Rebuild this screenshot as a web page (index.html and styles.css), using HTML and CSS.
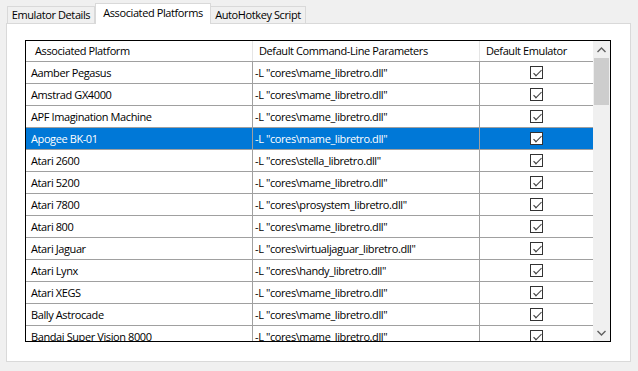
FILE: index.html
```html
<!DOCTYPE html>
<html lang="en">
  <head>
    <meta charset="UTF-8" />
    <title>Associated Platforms</title>
    <link rel="stylesheet" href="styles.css">
  </head>
  <body>
    <div class="tabs">
      <div class="tab tab-1">Emulator Details</div>
      <div class="tab tab-2 active">Associated Platforms</div>
      <div class="tab tab-3">AutoHotkey Script</div>
    </div>

    <div class="panel">
      <div class="grid">
        <div class="table">
          <div class="row head">
            <div class="cell c1">Associated Platform</div>
            <div class="cell c2">Default Command-Line Parameters</div>
            <div class="cell c3">Default Emulator</div>
          </div>
          <div class="row">
            <div class="cell c1">Aamber Pegasus</div>
            <div class="cell c2">-L "cores\mame_libretro.dll"</div>
            <div class="cell c3"><span class="check"></span></div>
          </div>
          <div class="row">
            <div class="cell c1">Amstrad GX4000</div>
            <div class="cell c2">-L "cores\mame_libretro.dll"</div>
            <div class="cell c3"><span class="check"></span></div>
          </div>
          <div class="row">
            <div class="cell c1">APF Imagination Machine</div>
            <div class="cell c2">-L "cores\mame_libretro.dll"</div>
            <div class="cell c3"><span class="check"></span></div>
          </div>
          <div class="row selected">
            <div class="cell c1">Apogee BK-01</div>
            <div class="cell c2">-L "cores\mame_libretro.dll"</div>
            <div class="cell c3"><span class="check"></span></div>
          </div>
          <div class="row">
            <div class="cell c1">Atari 2600</div>
            <div class="cell c2">-L "cores\stella_libretro.dll"</div>
            <div class="cell c3"><span class="check"></span></div>
          </div>
          <div class="row">
            <div class="cell c1">Atari 5200</div>
            <div class="cell c2">-L "cores\mame_libretro.dll"</div>
            <div class="cell c3"><span class="check"></span></div>
          </div>
          <div class="row">
            <div class="cell c1">Atari 7800</div>
            <div class="cell c2">-L "cores\prosystem_libretro.dll"</div>
            <div class="cell c3"><span class="check"></span></div>
          </div>
          <div class="row">
            <div class="cell c1">Atari 800</div>
            <div class="cell c2">-L "cores\mame_libretro.dll"</div>
            <div class="cell c3"><span class="check"></span></div>
          </div>
          <div class="row">
            <div class="cell c1">Atari Jaguar</div>
            <div class="cell c2">-L "cores\virtualjaguar_libretro.dll"</div>
            <div class="cell c3"><span class="check"></span></div>
          </div>
          <div class="row">
            <div class="cell c1">Atari Lynx</div>
            <div class="cell c2">-L "cores\handy_libretro.dll"</div>
            <div class="cell c3"><span class="check"></span></div>
          </div>
          <div class="row">
            <div class="cell c1">Atari XEGS</div>
            <div class="cell c2">-L "cores\mame_libretro.dll"</div>
            <div class="cell c3"><span class="check"></span></div>
          </div>
          <div class="row">
            <div class="cell c1">Bally Astrocade</div>
            <div class="cell c2">-L "cores\mame_libretro.dll"</div>
            <div class="cell c3"><span class="check"></span></div>
          </div>
          <div class="row">
            <div class="cell c1">Bandai Super Vision 8000</div>
            <div class="cell c2">-L "cores\mame_libretro.dll"</div>
            <div class="cell c3"><span class="check"></span></div>
          </div>
        </div>

        <!-- 세로 스크롤바 -->
        <div class="scrollbar">
          <div class="arrow">
            <svg width="9" height="6" viewBox="0 0 9 6"><path d="M0.5 5 L4.5 1 L8.5 5" fill="none" stroke="#606060" stroke-width="1.4"/></svg>
          </div>
          <div class="track">
            <div class="thumb"></div>
          </div>
          <div class="arrow">
            <svg width="9" height="6" viewBox="0 0 9 6"><path d="M0.5 1 L4.5 5 L8.5 1" fill="none" stroke="#606060" stroke-width="1.4"/></svg>
          </div>
        </div>
      </div>
    </div>
  </body>
</html>
```

FILE: styles.css
```css
* {
  box-sizing: border-box;
}
body {
  margin: 0;
  background-color: #f0f0f0;
  font-family: "Open Sans", "Noto Sans", sans-serif;
  font-size: 11px;
  letter-spacing: -0.4px;
  color: #000;
}

/* 탭 */
.tabs {
  display: flex;
  align-items: flex-end;
  height: 24px;
  padding-left: 7px;
  position: relative;
  z-index: 1;
}
.tab {
  height: 17px;
  line-height: 15px;
  border: 1px solid #d9d9d9;
  border-bottom: none;
  background-color: #f0f0f0;
  text-align: center;
  margin-bottom: 1px;
}
.tab-1 {
  width: 88px;
}
.tab-2 {
  width: 116px;
}
.tab-3 {
  width: 95px;
  border-left: none;
}
.tab.active {
  height: 21px;
  line-height: 17px;
  margin-bottom: 0;
  background-color: #fff;
}

/* 패널 */
.panel {
  margin-left: 6px;
  margin-top: -1px;
  width: 625px;
  height: 339px;
  border: 1px solid #d9d9d9;
  background-color: #fff;
  padding: 16px 0 0 18px;
}
.grid {
  display: flex;
  width: 586px;
  height: 302px;
  border: 1px solid #000;
}
.table {
  width: 567px;
  height: 300px;
  overflow: hidden;
}
.row {
  display: flex;
  height: 22px;
  line-height: 21px;
  border-bottom: 1px solid #a0a0a0;
  white-space: nowrap;
}
.cell {
  overflow: hidden;
}
.c1 {
  width: 227px;
  border-right: 1px solid #a0a0a0;
  padding-left: 5px;
}
.c2 {
  width: 227px;
  border-right: 1px solid #a0a0a0;
  padding-left: 2px;
}
.c3 {
  width: 113px;
  display: flex;
  align-items: center;
  justify-content: center;
}
.row.head {
  height: 21px;
  line-height: 20px;
}
.head .cell {
  border-right-color: #e5e5e5;
}
.head .c1 {
  padding-left: 9px;
}
.head .c2 {
  padding-left: 6px;
}
.head .c3 {
  justify-content: flex-start;
  padding-left: 6px;
}
.row.selected {
  background-color: #0078d7;
  color: #fff;
}

/* 체크박스 */
.check {
  width: 13px;
  height: 13px;
  border: 1px solid #333;
  background-color: #fff;
  position: relative;
}
.check::after {
  content: "";
  position: absolute;
  left: 3px;
  top: 1px;
  width: 6px;
  height: 3px;
  border-left: 1px solid #444;
  border-bottom: 1px solid #444;
  transform: translate(0, 2px) rotate(-45deg) scaleX(1.2);
}

/* 스크롤바 */
.scrollbar {
  width: 17px;
  height: 300px;
  background-color: #f0f0f0;
  display: flex;
  flex-direction: column;
}
.arrow {
  height: 17px;
  display: flex;
  align-items: center;
  justify-content: center;
}
.track {
  flex: 1;
  padding: 0 1px;
}
.thumb {
  height: 47px;
  background-color: #cdcdcd;
}
```
